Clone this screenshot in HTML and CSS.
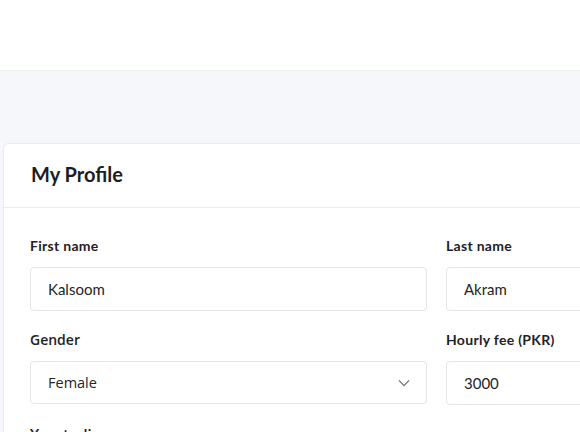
FILE: index.html
```html
<!DOCTYPE html>
<html>
<head>
<meta charset="utf-8">
<link rel="stylesheet" href="styles.css">
</head>
<body>
<header class="topbar"></header>
<main class="page">
  <section class="card">
    <div class="card-head"><h1 class="title">My Profile</h1></div>
    <div class="card-body">
      <div class="grid">
        <div class="field">
          <label class="label">First name</label>
          <div class="input">Kalsoom</div>
        </div>
        <div class="field">
          <label class="label">Last name</label>
          <div class="input">Akram</div>
        </div>
        <div class="field">
          <label class="label label-alt">Gender</label>
          <div class="input select">
            <span class="select-text">Female</span>
            <svg class="chev" width="12" height="8" viewBox="0 0 12 8"><path d="M1 1.5 L6 6.5 L11 1.5" fill="none" stroke="#7a7f87" stroke-width="1.3"/></svg>
          </div>
        </div>
        <div class="field">
          <label class="label">Hourly fee (PKR)</label>
          <div class="input">3000</div>
        </div>
        <div class="field full">
          <label class="label">Your tagline</label>
        </div>
      </div>
    </div>
  </section>
</main>
</body>
</html>
```
FILE: styles.css
```css
* { box-sizing: border-box; }
html, body { margin: 0; padding: 0; }
body {
  width: 580px;
  height: 432px;
  overflow: hidden;
  background: #f6f7fa;
  font-family: "Lato", "Open Sans", sans-serif;
  color: #1e2126;
}
.topbar {
  height: 71px;
  background: #ffffff;
  border-bottom: 1px solid #eceef1;
}
.page {
  padding: 72px 0 0 3px;
}
.card {
  width: 880px;
  background: #ffffff;
  border: 1px solid #e8eaee;
  border-radius: 6px 0 0 0;
}
.card-head {
  height: 64px;
  padding: 0 27px 3px;
  display: flex;
  align-items: center;
  border-bottom: 1px solid #eaecef;
}
.title {
  margin: 0;
  font-size: 20px;
  font-weight: 700;
  letter-spacing: 0;
  color: #1b1e23;
}
.card-body {
  padding: 28px 26px;
}
.grid {
  display: grid;
  grid-template-columns: 397px 397px;
  column-gap: 19px;
  row-gap: 19px;
}
.field {
  display: flex;
  flex-direction: column;
}
.full { grid-column: 1 / -1; }
.label {
  font-size: 14px;
  font-weight: 700;
  line-height: 20px;
  margin-bottom: 11px;
  letter-spacing: 0.3px;
  color: #1f2227;
}
.label-alt {
  font-family: "Open Sans", sans-serif;
  font-weight: 600;
  letter-spacing: 0;
}
.input {
  height: 44px;
  border: 1px solid #e2e5e9;
  border-radius: 4px;
  padding: 0 17px;
  display: flex;
  align-items: center;
  font-size: 15px;
  color: #222529;
}
.select {
  height: 43px;
  justify-content: space-between;
  padding-right: 16px;
}
.select-text {
  font-family: "Open Sans", sans-serif;
  font-size: 14.5px;
}
.chev { display: block; }
```
